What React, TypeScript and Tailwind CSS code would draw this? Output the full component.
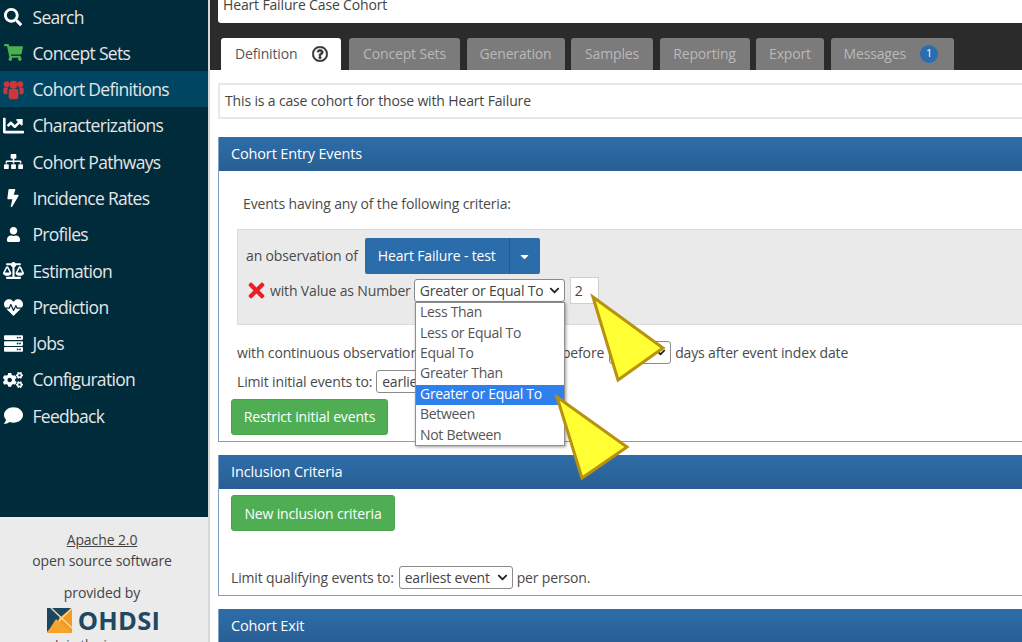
import {
  FaBalanceScale,
  FaBolt,
  FaCaretDown,
  FaChartLine,
  FaChevronDown,
  FaCogs,
  FaComment,
  FaHeartbeat,
  FaRegQuestionCircle,
  FaSearch,
  FaServer,
  FaShoppingCart,
  FaSitemap,
  FaTimes,
  FaUser,
} from "react-icons/fa";

function UsersIcon({ size }: { size: number }) {
  return (
    <svg width={size} height={size} viewBox="0 0 24 24" fill="currentColor">
      <circle cx="12" cy="6.5" r="4.6" />
      <circle cx="4.2" cy="6" r="3.3" />
      <circle cx="19.8" cy="6" r="3.3" />
      <path d="M6.5 13.5C6.5 11.8 8 11 9.5 11H14.500C16 11 17.500 11.800 17.500 13.500V20.500C17.500 22 16.500 23 15 23H9C7.500 23 6.500 22 6.500 20.500Z" />
      <path d="M0.500 11.500C0.500 10.300 1.500 9.800 2.500 9.800H6.500C5.500 10.800 5 12 5 13.500V17.500H2.500C1.300 17.500 0.500 16.800 0.500 15.500Z" />
      <path d="M23.500 11.500C23.500 10.300 22.500 9.800 21.500 9.800H17.500C18.500 10.800 19 12 19 13.500V17.500H21.500C22.700 17.500 23.500 16.800 23.500 15.500Z" />
    </svg>
  );
}

const navigation = [
  { name: "Search", icon: FaSearch, size: 18, color: "text-white" },
  { name: "Concept Sets", icon: FaShoppingCart, size: 19, color: "text-[#4caf50]" },
  { name: "Cohort Definitions", icon: UsersIcon, size: 21, color: "text-[#c9383a]", active: true },
  { name: "Characterizations", icon: FaChartLine, size: 21, color: "text-white" },
  { name: "Cohort Pathways", icon: FaSitemap, size: 19, color: "text-white" },
  { name: "Incidence Rates", icon: FaBolt, size: 18, color: "text-white" },
  { name: "Profiles", icon: FaUser, size: 15, color: "text-white" },
  { name: "Estimation", icon: FaBalanceScale, size: 21, color: "text-white" },
  { name: "Prediction", icon: FaHeartbeat, size: 19, color: "text-white" },
  { name: "Jobs", icon: FaServer, size: 19, color: "text-white" },
  { name: "Configuration", icon: FaCogs, size: 20, color: "text-white" },
  { name: "Feedback", icon: FaComment, size: 19, color: "text-white" },
];

const tabs = [
  { name: "Concept Sets", width: "w-[111px]" },
  { name: "Generation", width: "w-[98px]" },
  { name: "Samples", width: "w-[82px]" },
  { name: "Reporting", width: "w-[90px]" },
  { name: "Export", width: "w-[68px]" },
];

const options = [
  "Less Than",
  "Less or Equal To",
  "Equal To",
  "Greater Than",
  "Greater or Equal To",
  "Between",
  "Not Between",
];

function PanelHeader({ title }: { title: string }) {
  return (
    <div className="flex h-[34px] items-center bg-gradient-to-b from-[#2e6da9] to-[#285f94] pl-[12px] text-[14.5px] text-white">
      {title}
    </div>
  );
}

function Sidebar() {
  return (
    <aside className="flex h-full w-[208px] shrink-0 flex-col bg-[#002b3b]">
      <nav className="-mt-[1.5px] flex-1">
        {navigation.map((item) => (
          <div
            key={item.name}
            className={`flex h-[36.3px] items-center ${item.active ? "bg-[#004663]" : ""}`}
          >
            <span className={`flex w-[32.5px] shrink-0 justify-center pr-[6px] ${item.color}`}>
              <item.icon size={item.size} />
            </span>
            <span className="text-[17.5px] tracking-[-0.7px] text-[#e6e6e6]">{item.name}</span>
          </div>
        ))}
      </nav>
      <div className="flex h-[125px] flex-col items-center overflow-hidden bg-[#ebebeb] pr-[4px] pt-[13px] text-[14px] tracking-[-0.1px] text-[#444]">
        <a className="leading-[20px] underline">Apache 2.0</a>
        <p className="mt-[1px] leading-[20px]">open source software</p>
        <p className="mt-[12px] leading-[20px]">provided by</p>
        <div className="ml-[3px] mt-[4px] flex items-center gap-[6px]">
          <svg width="25" height="25" viewBox="0 0 25 25">
            <rect width="25" height="25" fill="#f39a23" />
            <path d="M0 0H25L12 10L9 25H0Z" fill="#1c4560" />
            <path d="M25 0L0 25M4 0L25 20" stroke="#fcd9a0" strokeWidth="1.4" />
            <path d="M0 25L9 11L25 25Z" fill="#f7a42e" />
          </svg>
          <span className="text-[25.5px] font-bold leading-[26px] tracking-[0.3px] text-[#1f4963]">OHDSI</span>
        </div>
        <p className="mt-[3px] text-[13px] leading-[16px]">Join the journey</p>
      </div>
    </aside>
  );
}

function Select({ label, className }: { label: string; className: string }) {
  return (
    <div
      className={`flex h-[23px] items-center justify-between rounded-[3px] border border-[#8a8a8a] bg-white pl-[5px] pr-[4px] text-[14px] tracking-[-0.2px] text-[#444] ${className}`}
    >
      <span className="truncate">{label}</span>
      <FaChevronDown size={11} className="shrink-0 text-[#222]" />
    </div>
  );
}

export default function App() {
  return (
    <div className="relative flex h-[642px] w-[1022px] overflow-hidden bg-white font-['Open_Sans',sans-serif] text-[14px] tracking-[-0.15px] text-[#4a4a4a]">
      <Sidebar />
      <div className="w-[2px] shrink-0 bg-[#d8d8d8]" />
      <main className="min-w-0 flex-1">
        {/* Title bar and tabs */}
        <div className="h-[70px] bg-[#2b2b2b] pl-[8px]">
          <div className="flex h-[23px] items-end rounded-bl-[3px] bg-white pb-[11px] pl-[5px] text-[14px] leading-[14px] text-[#444]">
            Heart Failure Case Cohort
          </div>
          <div className="mt-[15px] flex h-[32px] gap-[6.5px] pl-[3px]">
            <div className="mr-[1.5px] flex w-[120px] items-center gap-[15px] rounded-t-[3px] bg-white pb-[1px] pl-[14px] text-[#555]">
              Definition
              <FaRegQuestionCircle size={16} stroke="currentColor" strokeWidth={18} className="text-[#333]" />
            </div>
            {tabs.map((tab) => (
              <div
                key={tab.name}
                className={`flex items-center justify-center rounded-t-[3px] bg-[#7b7b7b] pb-[1px] text-[#b9b9b9] ${tab.width}`}
              >
                {tab.name}
              </div>
            ))}
            <div className="flex w-[123px] items-center gap-[14px] rounded-t-[3px] bg-[#7b7b7b] pb-[1px] pl-[13px] text-[#b9b9b9]">
              Messages
              <span className="flex h-[18px] w-[18px] items-center justify-center rounded-full bg-[#2a6db0] text-[11px] text-white">
                1
              </span>
            </div>
          </div>
        </div>

        <div className="pl-[8px]">
          <div className="mt-[13px] flex h-[36px] items-center border-2 border-r-0 border-[#e8e8e8] pb-[1px] pl-[5px] text-[#444]">
            This is a case cohort for those with Heart Failure
          </div>

          {/* Cohort Entry Events */}
          <section className="mt-[18px] h-[305px] border-b border-l border-[#7f9fc6]">
            <PanelHeader title="Cohort Entry Events" />
            <div className="pl-[18px]">
              <p className="ml-[6px] mt-[23px] leading-[20px]">Events having any of the following criteria:</p>
              <div className="mt-[15px] h-[96px] border border-r-0 border-[#dcdcdc] bg-[#eaeaea] pl-[8px] pt-[8px]">
                <div className="flex h-[36px] items-center">
                  <span className="pb-[2px]">an observation of</span>
                  <div className="ml-[7px] flex h-[36px] rounded-[2px] bg-[#2b6cab] text-white">
                    <span className="flex w-[145px] items-center justify-center border-r border-[#245a8e] pb-[1px]">
                      Heart Failure - test
                    </span>
                    <span className="flex w-[30px] items-center justify-center">
                      <FaCaretDown size={13} />
                    </span>
                  </div>
                </div>
                <div className="mt-[3px] flex h-[27px] items-center">
                  <FaTimes size={23} className="-ml-[1px] text-[#ee1c25]" />
                  <span className="ml-[2px]">with Value as Number</span>
                  <Select label="Greater or Equal To" className="ml-[3px] w-[151px]" />
                  <div className="ml-[5px] flex h-[27px] w-[29px] items-center border border-[#cfcfcf] bg-white pl-[4px] text-[#444]">
                    2
                  </div>
                </div>
              </div>
              <div className="-ml-[12px] mt-[16px] flex h-[22px] items-center pl-[12px]">
                <span>with continuous observation of at least</span>
                <span className="ml-[33px]">0 days before</span>
                <Select label="0" className="ml-[5px] w-[62px]" />
                <span className="ml-[4px]">days after event index date</span>
              </div>
              <div className="mt-[7px] flex h-[23px] items-center">
                <span>Limit initial events to:</span>
                <Select label="earliest event" className="ml-[4px] w-[120px]" />
              </div>
              <button className="-ml-[6px] mt-[6px] flex h-[36px] w-[157px] items-center justify-center rounded-[3px] border border-[#4aa24d] bg-[#4fae54] pb-[2px] text-white">
                Restrict initial events
              </button>
            </div>
          </section>

          {/* Inclusion Criteria */}
          <section className="mt-[13px] h-[141px] border-b border-l border-[#7f9fc6]">
            <PanelHeader title="Inclusion Criteria" />
            <div className="pl-[12px]">
              <button className="mt-[6px] flex h-[36px] w-[164px] items-center justify-center rounded-[3px] border border-[#4aa24d] bg-[#4fae54] text-white">
                New inclusion criteria
              </button>
              <div className="mt-[35px] flex h-[23px] items-center">
                <span>Limit qualifying events to:</span>
                <Select label="earliest event" className="ml-[5px] w-[114px]" />
                <span className="ml-[4px]">per person.</span>
              </div>
            </div>
          </section>

          {/* Cohort Exit */}
          <section className="mt-[13px] border-l border-[#7f9fc6]">
            <PanelHeader title="Cohort Exit" />
          </section>
        </div>
      </main>

      {/* Open select list */}
      <ul className="absolute left-[415px] top-[302px] h-[144px] w-[150px] border border-[#8f8f8f] bg-white tracking-[-0.3px] shadow-[1px_1px_3px_rgba(0,0,0,0.4)]">
        {options.map((option) => (
          <li
            key={option}
            className={`flex h-[20.4px] items-center pb-[3px] pl-[4px] ${
              option === "Greater or Equal To" ? "bg-[#2f80ed] text-white" : "text-[#555]"
            }`}
          >
            {option}
          </li>
        ))}
      </ul>

      {/* Yellow callout arrows */}
      <svg className="pointer-events-none absolute left-0 top-0" width="1022" height="642">
        <polygon points="593,297 663,348 618,380" fill="#ffff33" stroke="#b8920f" strokeWidth="3" />
        <polygon points="557,397 627,447 582,478" fill="#ffff33" stroke="#b8920f" strokeWidth="3" />
      </svg>
    </div>
  );
}
